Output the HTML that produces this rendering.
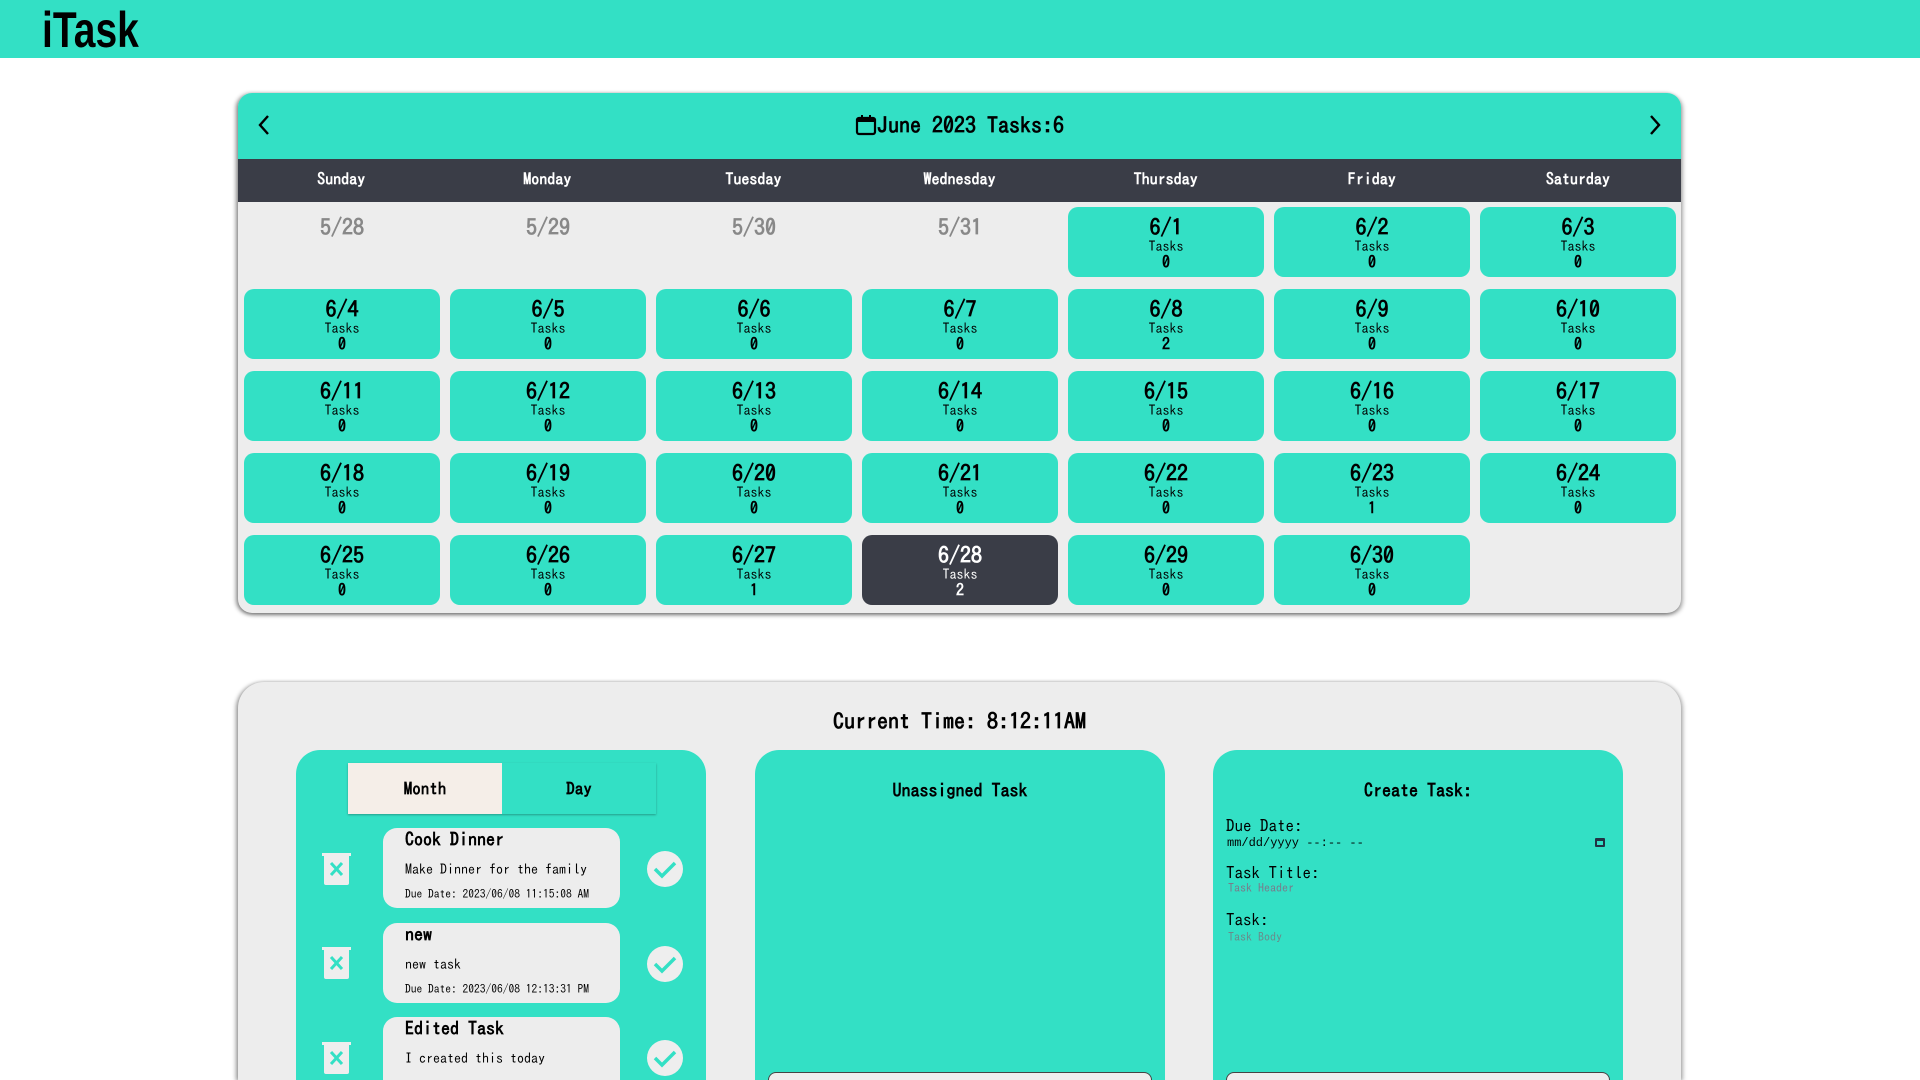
<!DOCTYPE html>
<html><head><meta charset="utf-8">
<style>
*{box-sizing:border-box;margin:0;padding:0}
html,body{width:1920px;height:1080px;overflow:hidden}
body{background:#fff;font-family:"IPAGothic","Liberation Sans",sans-serif;position:relative}
.clip{position:absolute;left:0;top:0;width:1920px;height:1080px;overflow:hidden}
.top{position:absolute;left:0;top:0;width:1920px;height:58px;background:#33e0c5}
.logo{position:absolute;left:42px;top:1px;font-family:"Liberation Sans",sans-serif;font-weight:bold;font-size:50px;color:#000;transform:scaleX(.78);transform-origin:left top}
.cal{position:absolute;left:238px;top:93px;width:1443px;height:520px;background:#ededed;border-radius:14px;box-shadow:-2px 1px 4px rgba(0,0,0,.45),2px 2px 4px rgba(0,0,0,.3);overflow:hidden}
.ch{height:66px;background:#33e0c5;position:relative}
.ch .t{position:absolute;left:0;right:0;top:21px;text-align:center;font-size:22px;font-weight:bold;color:#000}
.dh{height:43px;background:#3a3d47;display:grid;grid-template-columns:repeat(7,1fr);color:#fff;font-weight:bold;font-size:16px;text-align:center;line-height:41px}
.grid{display:grid;grid-template-columns:repeat(7,196px);column-gap:10px;row-gap:12px;padding:5px 6px}
.c{height:70px;border-radius:10px;background:#33e0c5;text-align:center;color:#000;position:relative}
.c b{display:block;font-size:22px;padding-top:8px;line-height:24px}
.c i{display:block;font-style:normal;font-size:14px;line-height:15px}
.c u{display:block;text-decoration:none;font-weight:bold;font-size:16px;line-height:17px}
.c.o{background:none;color:#8a8a8a}
.c.o b{color:#888}
.c.e{background:none}
.c.s{background:#3a3d47;color:#fff}
.bot{position:absolute;left:238px;top:682px;width:1443px;height:398px;background:#ededed;border-radius:26px 26px 0 0;box-shadow:-2px 1px 4px rgba(0,0,0,.4),2px 1px 4px rgba(0,0,0,.3);overflow:hidden}
.ct{position:absolute;left:0;right:0;top:28px;text-align:center;font-size:22px;font-weight:bold}
.card{position:absolute;top:68px;width:410px;height:330px;background:#33e0c5;border-radius:24px 24px 0 0;overflow:hidden}
.card h3{text-align:center;font-size:18px;margin-top:32px}
.tabs{position:absolute;left:52px;top:13px;width:308px;height:51px;display:flex;box-shadow:0 1px 2px rgba(0,0,0,.3)}
.tabs div{flex:1;text-align:center;line-height:53px;font-size:17px;font-weight:bold}
.task{position:absolute;left:87px;width:237px;height:80px;background:#ededed;border-radius:14px;padding:2px 22px;font-size:14px}
.task .h{font-size:18px;font-weight:bold;line-height:20px}
.task .b{margin-top:12px;font-size:14px}
.task .d{margin-top:13px;font-size:11.5px}
.ic{position:absolute}
</style></head><body><div class="clip">
<div class="top"><div class="logo">iTask</div></div>
<div class="cal">
 <div class="ch">
  <svg style="position:absolute;left:18px;top:20px" width="16" height="24" viewBox="0 0 16 24"><path d="M12 3L4 12l8 9" fill="none" stroke="#000" stroke-width="2.4"/></svg>
  <svg style="position:absolute;right:18px;top:20px" width="16" height="24" viewBox="0 0 16 24"><path d="M4 3l8 9-8 9" fill="none" stroke="#000" stroke-width="2.4"/></svg>
  <div class="t"><svg width="22" height="22" viewBox="0 0 22 22" style="vertical-align:-3px"><rect x="2" y="4" width="18" height="16" rx="2" fill="none" stroke="#000" stroke-width="2.2"/><rect x="2" y="4" width="18" height="4" fill="#000"/><rect x="6" y="1" width="2" height="4" fill="#000"/><rect x="14" y="1" width="2" height="4" fill="#000"/></svg>June 2023 Tasks:6</div>
 </div>
 <div class="dh"><div>Sunday</div><div>Monday</div><div>Tuesday</div><div>Wednesday</div><div>Thursday</div><div>Friday</div><div>Saturday</div></div>
 <div class="grid">
  <div class="c o"><b>5/28</b></div><div class="c o"><b>5/29</b></div><div class="c o"><b>5/30</b></div><div class="c o"><b>5/31</b></div>
  <div class="c"><b>6/1</b><i>Tasks</i><u>0</u></div><div class="c"><b>6/2</b><i>Tasks</i><u>0</u></div><div class="c"><b>6/3</b><i>Tasks</i><u>0</u></div>
  <div class="c"><b>6/4</b><i>Tasks</i><u>0</u></div><div class="c"><b>6/5</b><i>Tasks</i><u>0</u></div><div class="c"><b>6/6</b><i>Tasks</i><u>0</u></div><div class="c"><b>6/7</b><i>Tasks</i><u>0</u></div><div class="c"><b>6/8</b><i>Tasks</i><u>2</u></div><div class="c"><b>6/9</b><i>Tasks</i><u>0</u></div><div class="c"><b>6/10</b><i>Tasks</i><u>0</u></div>
  <div class="c"><b>6/11</b><i>Tasks</i><u>0</u></div><div class="c"><b>6/12</b><i>Tasks</i><u>0</u></div><div class="c"><b>6/13</b><i>Tasks</i><u>0</u></div><div class="c"><b>6/14</b><i>Tasks</i><u>0</u></div><div class="c"><b>6/15</b><i>Tasks</i><u>0</u></div><div class="c"><b>6/16</b><i>Tasks</i><u>0</u></div><div class="c"><b>6/17</b><i>Tasks</i><u>0</u></div>
  <div class="c"><b>6/18</b><i>Tasks</i><u>0</u></div><div class="c"><b>6/19</b><i>Tasks</i><u>0</u></div><div class="c"><b>6/20</b><i>Tasks</i><u>0</u></div><div class="c"><b>6/21</b><i>Tasks</i><u>0</u></div><div class="c"><b>6/22</b><i>Tasks</i><u>0</u></div><div class="c"><b>6/23</b><i>Tasks</i><u>1</u></div><div class="c"><b>6/24</b><i>Tasks</i><u>0</u></div>
  <div class="c"><b>6/25</b><i>Tasks</i><u>0</u></div><div class="c"><b>6/26</b><i>Tasks</i><u>0</u></div><div class="c"><b>6/27</b><i>Tasks</i><u>1</u></div><div class="c s"><b>6/28</b><i>Tasks</i><u>2</u></div><div class="c"><b>6/29</b><i>Tasks</i><u>0</u></div><div class="c"><b>6/30</b><i>Tasks</i><u>0</u></div><div class="c e"></div>
 </div>
</div>
<div class="bot">
 <div class="ct">Current Time: 8:12:11AM</div>
 <div class="card" style="left:58px">
  <div class="tabs"><div style="background:#f5eee8">Month</div><div style="background:#33e0c5">Day</div></div>
  <div class="task" style="top:78px"><div class="h">Cook Dinner</div><div class="b">Make Dinner for the family</div><div class="d">Due Date: 2023/06/08 11:15:08 AM</div></div>
  <div class="task" style="top:173px"><div class="h">new</div><div class="b">new task</div><div class="d">Due Date: 2023/06/08 12:13:31 PM</div></div>
  <div class="task" style="top:267px"><div class="h">Edited Task</div><div class="b">I created this today</div></div>
  <svg class="ic" style="left:26px;top:102px" width="30" height="34" viewBox="0 0 30 34"><rect x="0" y="1" width="29" height="3" fill="#eee"/><path d="M2 3h25v28a2 2 0 0 1-2 2H4a2 2 0 0 1-2-2z" fill="#eee"/><path d="M9 11l11 12M20 11L9 23" stroke="#33e0c5" stroke-width="3"/></svg>
  <svg class="ic" style="left:26px;top:196px" width="30" height="34" viewBox="0 0 30 34"><rect x="0" y="1" width="29" height="3" fill="#eee"/><path d="M2 3h25v28a2 2 0 0 1-2 2H4a2 2 0 0 1-2-2z" fill="#eee"/><path d="M9 11l11 12M20 11L9 23" stroke="#33e0c5" stroke-width="3"/></svg>
  <svg class="ic" style="left:26px;top:291px" width="30" height="34" viewBox="0 0 30 34"><rect x="0" y="1" width="29" height="3" fill="#eee"/><path d="M2 3h25v28a2 2 0 0 1-2 2H4a2 2 0 0 1-2-2z" fill="#eee"/><path d="M9 11l11 12M20 11L9 23" stroke="#33e0c5" stroke-width="3"/></svg>
  <svg class="ic" style="left:350px;top:100px" width="38" height="38" viewBox="0 0 38 38"><circle cx="19" cy="19" r="18" fill="#eee"/><path d="M9 19l7 7 13-13" fill="none" stroke="#33e0c5" stroke-width="3.5"/></svg>
  <svg class="ic" style="left:350px;top:195px" width="38" height="38" viewBox="0 0 38 38"><circle cx="19" cy="19" r="18" fill="#eee"/><path d="M9 19l7 7 13-13" fill="none" stroke="#33e0c5" stroke-width="3.5"/></svg>
  <svg class="ic" style="left:350px;top:289px" width="38" height="38" viewBox="0 0 38 38"><circle cx="19" cy="19" r="18" fill="#eee"/><path d="M9 19l7 7 13-13" fill="none" stroke="#33e0c5" stroke-width="3.5"/></svg>
 </div>
 <div class="card" style="left:517px">
  <h3>Unassigned Task</h3>
  <div style="position:absolute;left:13px;top:322px;width:384px;height:40px;background:#eee;border:1px solid #444;border-radius:8px"></div>
 </div>
 <div class="card" style="left:975px">
  <h3>Create Task:</h3>
  <div style="position:absolute;left:13px;top:68px;font-size:17px">Due Date:</div>
  <div style="position:absolute;left:14px;top:86px;font-size:12px;font-family:'Liberation Mono',monospace">mm/dd/yyyy --:-- --</div>
  <div style="position:absolute;right:18px;top:88px;width:10px;height:9px;border:2px solid #234;border-top-width:3px;border-radius:1px"></div>
  <div style="position:absolute;left:13px;top:115px;font-size:17px">Task Title:</div>
  <div style="position:absolute;left:15px;top:132px;font-size:12px;color:#7a7a8a">Task Header</div>
  <div style="position:absolute;left:13px;top:162px;font-size:17px">Task:</div>
  <div style="position:absolute;left:15px;top:181px;font-size:12px;color:#6a8a8a">Task Body</div>
  <div style="position:absolute;left:13px;top:322px;width:384px;height:40px;background:#eee;border:1px solid #444;border-radius:8px"></div>
 </div>
</div>
</div></body></html>
